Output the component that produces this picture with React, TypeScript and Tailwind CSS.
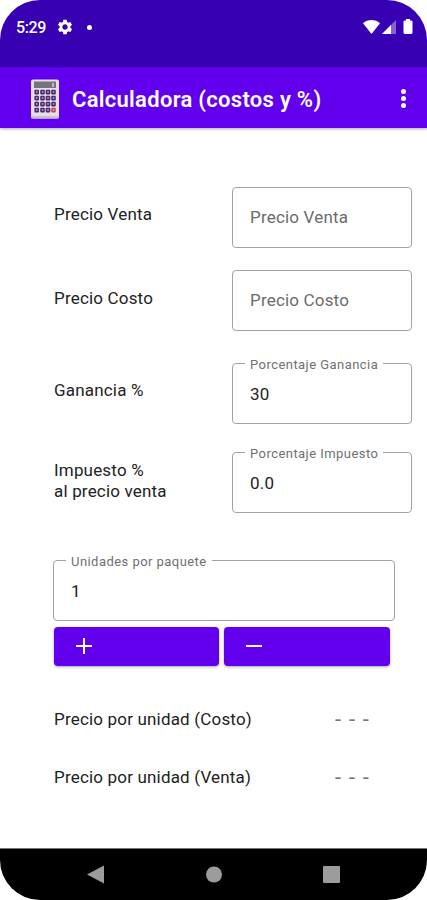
import { useState } from 'react';

type FieldProps = {
  label: string;
  value: string;
  onChange: (value: string) => void;
};

const OutlinedField = ({ label, value, onChange }: FieldProps) => (
  <fieldset className="h-[61px] w-full min-w-0 rounded-[4px] border border-[#a3a3a3] pl-[12px]">
    {value && (
      <legend className="h-px px-[5px] text-[13px] leading-[1px] tracking-[0.45px] whitespace-nowrap text-[#707070]">
        <span className="relative top-px">{label}</span>
      </legend>
    )}
    <input
      aria-label={label}
      placeholder={label}
      value={value}
      onChange={(e) => onChange(e.target.value)}
      className="block h-[59px] w-full bg-transparent pt-px pl-[5px] text-[17px] tracking-[0.18px] text-[#222] outline-none placeholder:text-[#6b6b6b] placeholder-shown:pt-0 placeholder-shown:pb-px"
    />
  </fieldset>
);

const CalculatorIcon = () => (
  <svg width="30" height="40" viewBox="0 0 30 40">
    <rect x="1" y="0.5" width="28" height="39" rx="2" fill="#e4dfe6" />
    <rect x="1" y="37" width="28" height="2.5" rx="1" fill="#c9c2cc" />
    <rect x="4" y="2.5" width="22" height="6.5" fill="#74757a" />
    <path d="M23 4v4" stroke="#d5d5d5" strokeWidth="1.5" />
    {[13, 19, 25, 31].map((y) =>
      [6.7, 12.5, 18, 23.5].map((x) => (
        <g key={`${x}-${y}`}>
          <rect
            x={x - 2.3}
            y={y - 2.2}
            width="4.6"
            height="4.6"
            rx="1"
            fill={x > 23 && y > 29 ? '#c8475b' : '#4e2870'}
          />
          <rect x={x - 0.8} y={y - 0.7} width="1.7" height="1.3" fill="#c5aed2" />
        </g>
      ))
    )}
  </svg>
);

const StatusBar = () => (
  <div className="flex h-[67px] shrink-0 items-start bg-[#3700b3] pt-[17px] pr-[14px] pl-[16px] text-white">
    <span className="w-[31px] text-[16px] leading-[22px] font-medium tracking-[-0.35px] whitespace-nowrap">5:29</span>
    <svg className="mt-[1px] ml-[9px]" width="18" height="18" viewBox="0 0 24 24" fill="currentColor">
      <path d="M19.14 12.94c.04-.3.06-.61.06-.94 0-.32-.02-.64-.07-.94l2.03-1.58c.18-.14.23-.41.12-.61l-1.92-3.32c-.12-.22-.37-.29-.59-.22l-2.39.96c-.5-.38-1.03-.7-1.62-.94l-.36-2.54c-.04-.24-.24-.41-.48-.41h-3.84c-.24 0-.43.17-.47.41l-.36 2.54c-.59.24-1.13.57-1.62.94l-2.39-.96c-.22-.08-.47 0-.59.22L2.74 8.87c-.12.21-.08.47.12.61l2.03 1.58c-.05.3-.09.63-.09.94s.02.64.07.94l-2.03 1.58c-.18.14-.23.41-.12.61l1.92 3.32c.12.22.37.29.59.22l2.39-.96c.5.38 1.03.7 1.62.94l.36 2.54c.05.24.24.41.48.41h3.84c.24 0 .44-.17.47-.41l.36-2.54c.59-.24 1.13-.56 1.62-.94l2.39.96c.22.08.47 0 .59-.22l1.92-3.32c.12-.22.07-.47-.12-.61l-2.01-1.58zM12 15.6c-1.98 0-3.6-1.62-3.6-3.6s1.62-3.6 3.6-3.6 3.6 1.62 3.6 3.6-1.62 3.6-3.6 3.6z" />
    </svg>
    <span className="mt-[8px] ml-[13px] size-[5px] rounded-full bg-white" />
    <svg className="mt-[3px] ml-auto" width="17" height="14" viewBox="0 0 17 14" fill="currentColor">
      <path d="M0 3.3C4.8-1.1 12.2-1.1 17 3.3L8.5 14z" />
    </svg>
    <svg className="mt-[3px] ml-[2px]" width="14" height="14" viewBox="0 0 14 14">
      <path d="M14 0v14H0z" fill="#8761d4" />
      <path d="M9 5v9H0z" fill="#fff" />
    </svg>
    <svg className="mt-[2px] ml-[7px]" width="10" height="15" viewBox="0 0 10 15" fill="currentColor">
      <path d="M3 0h4v1.5h1.3Q9.5 1.5 9.5 3v10.5Q9.5 15 8 15H2Q.5 15 .5 13.5V3Q.5 1.5 1.7 1.5H3z" />
    </svg>
  </div>
);

const App = () => {
  const [salePrice, setSalePrice] = useState('');
  const [costPrice, setCostPrice] = useState('');
  const [profit, setProfit] = useState('30');
  const [tax, setTax] = useState('0.0');
  const [units, setUnits] = useState('1');

  const changeUnits = (step: number) => {
    setUnits(String(Math.max(1, Number(units) + step)));
  };

  const unitPrice = (price: string) => (price ? (Number(price) / Number(units)).toFixed(2) : '- - -');

  return (
    <div className="flex h-[900px] w-[427px] flex-col overflow-hidden rounded-[40px] bg-white font-['Roboto',sans-serif]">
      <StatusBar />

      <header className="flex h-[61px] shrink-0 items-center bg-[#6200ee] pt-[2px] pr-[21px] pl-[30px] text-white shadow-[0_1px_3px_rgba(0,0,0,0.35)]">
        <CalculatorIcon />
        <h1 className="ml-[12px] pt-[2px] text-[22px] font-semibold tracking-[0.29px] whitespace-nowrap">
          Calculadora (costos y %)
        </h1>
        <button aria-label="Menú" className="ml-auto flex flex-col gap-[2px]">
          <span className="size-[5px] rounded-full bg-white" />
          <span className="size-[5px] rounded-full bg-white" />
          <span className="size-[5px] rounded-full bg-white" />
        </button>
      </header>

      <main className="flex grow flex-col pt-[59px] pl-[54px] text-[17px] leading-[21px] tracking-[0.18px] text-[#222]">
        <div className="grid grid-cols-[178px_180px]">
          <div className="pt-[17px]">Precio Venta</div>
          <div className="h-[83px]">
            <OutlinedField label="Precio Venta" value={salePrice} onChange={setSalePrice} />
          </div>
          <div className="pt-[18px]">Precio Costo</div>
          <div className="h-[93px]">
            <OutlinedField label="Precio Costo" value={costPrice} onChange={setCostPrice} />
          </div>
          <div className="pt-[17px]">Ganancia %</div>
          <div className="h-[89px]">
            <OutlinedField label="Porcentaje Ganancia" value={profit} onChange={setProfit} />
          </div>
          <div className="pt-[8px]">
            Impuesto %
            <br />
            al precio venta
          </div>
          <div className="h-[108px]">
            <OutlinedField label="Porcentaje Impuesto" value={tax} onChange={setTax} />
          </div>
        </div>

        <div className="-ml-px w-[342px]">
          <OutlinedField label="Unidades por paquete" value={units} onChange={setUnits} />
        </div>

        <div className="mt-[6px] flex gap-[5px]">
          <button
            aria-label="Agregar"
            onClick={() => changeUnits(1)}
            className="flex h-[39px] w-[165px] items-center rounded-[4px] bg-[#6200ee] pb-px pl-[22px] shadow-[0_1px_3px_rgba(0,0,0,0.35)]"
          >
            <svg width="16" height="16" viewBox="0 0 16 16" stroke="#fff" strokeWidth="2">
              <path d="M0 8h16M8 0v16" />
            </svg>
          </button>
          <button
            aria-label="Quitar"
            onClick={() => changeUnits(-1)}
            className="flex h-[39px] w-[166px] items-center rounded-[4px] bg-[#6200ee] pb-px pl-[22px] shadow-[0_1px_3px_rgba(0,0,0,0.35)]"
          >
            <svg width="16" height="16" viewBox="0 0 16 16" stroke="#fff" strokeWidth="2">
              <path d="M0 8h16" />
            </svg>
          </button>
        </div>

        <div className="mt-[43px] flex">
          <span className="w-[281px]">Precio por unidad (Costo)</span>
          <span className="text-[22px] tracking-[1.2px] text-[#777]">{unitPrice(costPrice)}</span>
        </div>
        <div className="mt-[37px] flex">
          <span className="w-[281px]">Precio por unidad (Venta)</span>
          <span className="text-[22px] tracking-[1.2px] text-[#777]">{unitPrice(salePrice)}</span>
        </div>
      </main>

      <nav className="h-[52px] shrink-0 border-t border-[#777] bg-black">
        <svg width="427" height="51" viewBox="0 0 427 51" fill="#9c9c9c">
          <path d="M87 25.5l17-9v18z" />
          <circle cx="214" cy="25.5" r="8" />
          <rect x="323" y="17" width="17" height="17" rx="1" />
        </svg>
      </nav>
    </div>
  );
};

export default App;
